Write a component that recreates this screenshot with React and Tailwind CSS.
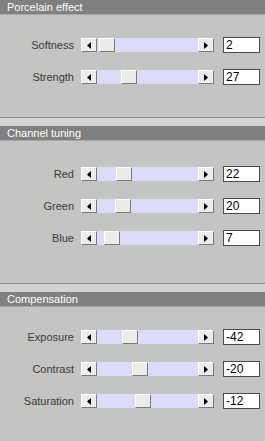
import React from "react";

const sections = [
  {
    title: "Porcelain effect",
    pt: "pt-[14px]",
    pb: "pb-[24px]",
    sep: true,
    rows: [
      { label: "Softness", value: "2", off: 2 },
      { label: "Strength", value: "27", off: 24 },
    ],
  },
  {
    title: "Channel tuning",
    pt: "pt-[17px]",
    pb: "pb-[29px]",
    sep: true,
    rows: [
      { label: "Red", value: "22", off: 19 },
      { label: "Green", value: "20", off: 18 },
      { label: "Blue", value: "7", off: 7 },
    ],
  },
  {
    title: "Compensation",
    pt: "pt-[14px]",
    pb: "pb-0",
    sep: false,
    rows: [
      { label: "Exposure", value: "-42", off: 25 },
      { label: "Contrast", value: "-20", off: 35 },
      { label: "Saturation", value: "-12", off: 38 },
    ],
  },
];

function ArrowBtn({ dir }) {
  return (
    <div className="w-[16px] h-[14px] shrink-0 bg-[#ececec] border border-t-white border-l-white border-r-[#7a7a7a] border-b-[#7a7a7a] flex items-center justify-center">
      <svg width="4" height="7" viewBox="0 0 4 7">
        {dir === "left" ? (
          <polygon points="0,3.5 4,0 4,7" fill="#000" />
        ) : (
          <polygon points="4,3.5 0,0 0,7" fill="#000" />
        )}
      </svg>
    </div>
  );
}

function Row({ label, value, off }) {
  return (
    <div className="flex items-center h-[32px]">
      <div className="w-[74px] text-right text-[11px] text-[#3a3a3a] leading-none">{label}</div>
      <div className="ml-[7px] w-[133px] h-[14px] flex bg-[#dcdcfa]">
        <ArrowBtn dir="left" />
        <div className="flex-1 relative">
          <div
            className="absolute top-0 w-[16px] h-[14px] bg-[#ebebe8] border border-t-white border-l-white border-r-[#7a7a7a] border-b-[#7a7a7a]"
            style={{ left: off }}
          />
        </div>
        <ArrowBtn dir="right" />
      </div>
      <div className="ml-[9px] w-[37px] h-[16px] bg-white border border-[#4a4a4a] text-[12px] leading-[14px] text-black pl-[2px]">
        {value}
      </div>
    </div>
  );
}

export default function App() {
  return (
    <div className="w-[265px] h-[441px] bg-[#c4c4c2] overflow-hidden font-['Liberation_Sans',Arial,sans-serif]">
      {sections.map((s) => (
        <div key={s.title}>
          <div className="h-[15px] bg-[#808080] text-white text-[11px] leading-[15px] pl-[7px] border-b border-[#a8a8a8]">
            {s.title}
          </div>
          <div className={`${s.pt} ${s.pb}`}>
            {s.rows.map((r) => (
              <Row key={r.label} {...r} />
            ))}
          </div>
          {s.sep && <div className="h-[9px] border-t border-[#909090] bg-[#d2d2d0]" />}
        </div>
      ))}
    </div>
  );
}
